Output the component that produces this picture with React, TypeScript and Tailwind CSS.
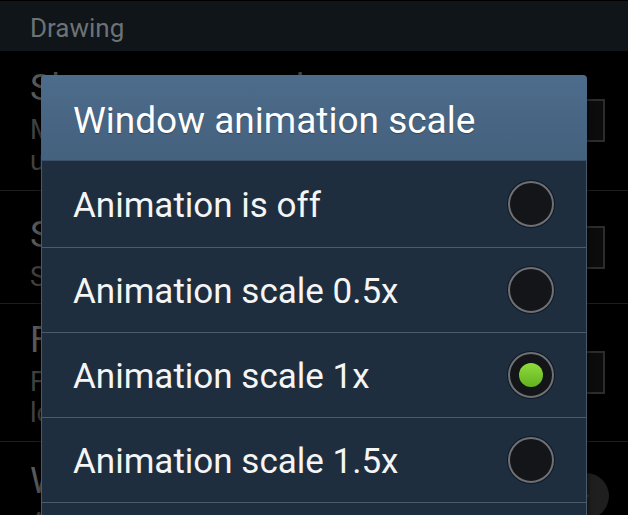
import React from 'react';

type BgItem = {
  title: string;
  lines: string[];
  h: string;
  pt: string;
  control: 'check' | 'arrow' | 'none';
};

const bgItems: BgItem[] = [
  { title: 'Show screen updates', lines: ['Make areas of the screen flash when they are', 'updated'], h: 'h-[140px]', pt: 'pt-[17px]', control: 'check' },
  { title: 'Show layout boundaries', lines: ['Show clip bounds, margins, etc.'], h: 'h-[113px]', pt: 'pt-[24px]', control: 'check' },
  { title: 'Force RTL layout direction', lines: ['Force screen layout direction to RTL for all', 'locales'], h: 'h-[138px]', pt: 'pt-[16px]', control: 'check' },
  { title: 'Window animation scale', lines: ['Animation scale 1x'], h: 'h-[113px]', pt: 'pt-[19px]', control: 'arrow' },
];

const options = ['Animation is off', 'Animation scale 0.5x', 'Animation scale 1x', 'Animation scale 1.5x', 'Animation scale 2x'];

const Radio = ({ on }: { on: boolean }) => (
  <div className="w-[46px] h-[46px] rounded-full border-2 border-[#6d7176] bg-[#141519] shadow-[0_0_0_1px_#0f1822] flex items-center justify-center shrink-0">
    {on && <div className="w-[24px] h-[24px] rounded-full bg-gradient-to-b from-[#8fdc3c] to-[#62b21e]" />}
  </div>
);

export default function App() {
  return (
    <div className="w-[628px] h-[515px] relative overflow-hidden bg-black font-['Roboto',sans-serif]">
      {/* settings list behind the dialog */}
      <div className="pt-px">
        <div className="h-[50px] bg-[#0f1519] flex items-center pl-[30px] pt-[5px] text-[26px] text-[#6d7276]">Drawing</div>
        {bgItems.map((item, i) => (
          <div key={i} className={`${item.h} border-b border-[#1e1e1e] flex items-center pl-[30px] pr-[23px]`}>
            <div className={`self-start flex-1 ${item.pt} whitespace-nowrap overflow-hidden`}>
              <div className="text-[36px] leading-[40px] text-[#5a5a5a]">{item.title}</div>
              <div className="mt-[7px] text-[27px] leading-[31px] text-[#424242]">
                {item.lines.map((l, j) => (
                  <div key={j}>{l}</div>
                ))}
              </div>
            </div>
            {item.control === 'check' && (
              <div className="w-[43px] h-[43px] border-2 border-[#2c2c2c] bg-[#0c0c0c] shrink-0" />
            )}
            {item.control === 'arrow' && (
              <div className="w-[46px] h-[46px] rounded-full bg-[#1f1f1f] flex items-center justify-center shrink-0 -mr-[4px] -mt-[5px]">
                <svg width="10" height="14" viewBox="0 0 10 14">
                  <path d="M1 1 L8 7 L1 13 Z" fill="#3e3e3e" />
                </svg>
              </div>
            )}
          </div>
        ))}
      </div>

      {/* dialog */}
      <div className="absolute left-[41px] top-[75px] w-[546px] rounded-t-[4px] overflow-hidden shadow-[0_0_6px_rgba(0,0,0,0.6)]">
        <div className="h-[86px] bg-gradient-to-b from-[#4d6c8b] to-[#44617e] border-b border-[#3a5169] flex items-center pl-[32px] pt-[7px] text-[37px] text-white [text-shadow:0_1px_1px_rgba(0,0,0,0.3)]">
          Window animation scale
        </div>
        <div className="bg-[#1f2e3e] border-x border-[#4a5a6b]">
          {options.map((o, i) => (
            <div
              key={o}
              className={`${i === 0 ? 'h-[87px]' : 'h-[85px]'} border-b border-[#4b5b6b] flex items-center justify-between pl-[31px] pr-[32px]`}
            >
              <span className="pt-[4px] text-[35px] text-[#f5f5f5]">{o}</span>
              <Radio on={i === 2} />
            </div>
          ))}
        </div>
      </div>
    </div>
  );
}
